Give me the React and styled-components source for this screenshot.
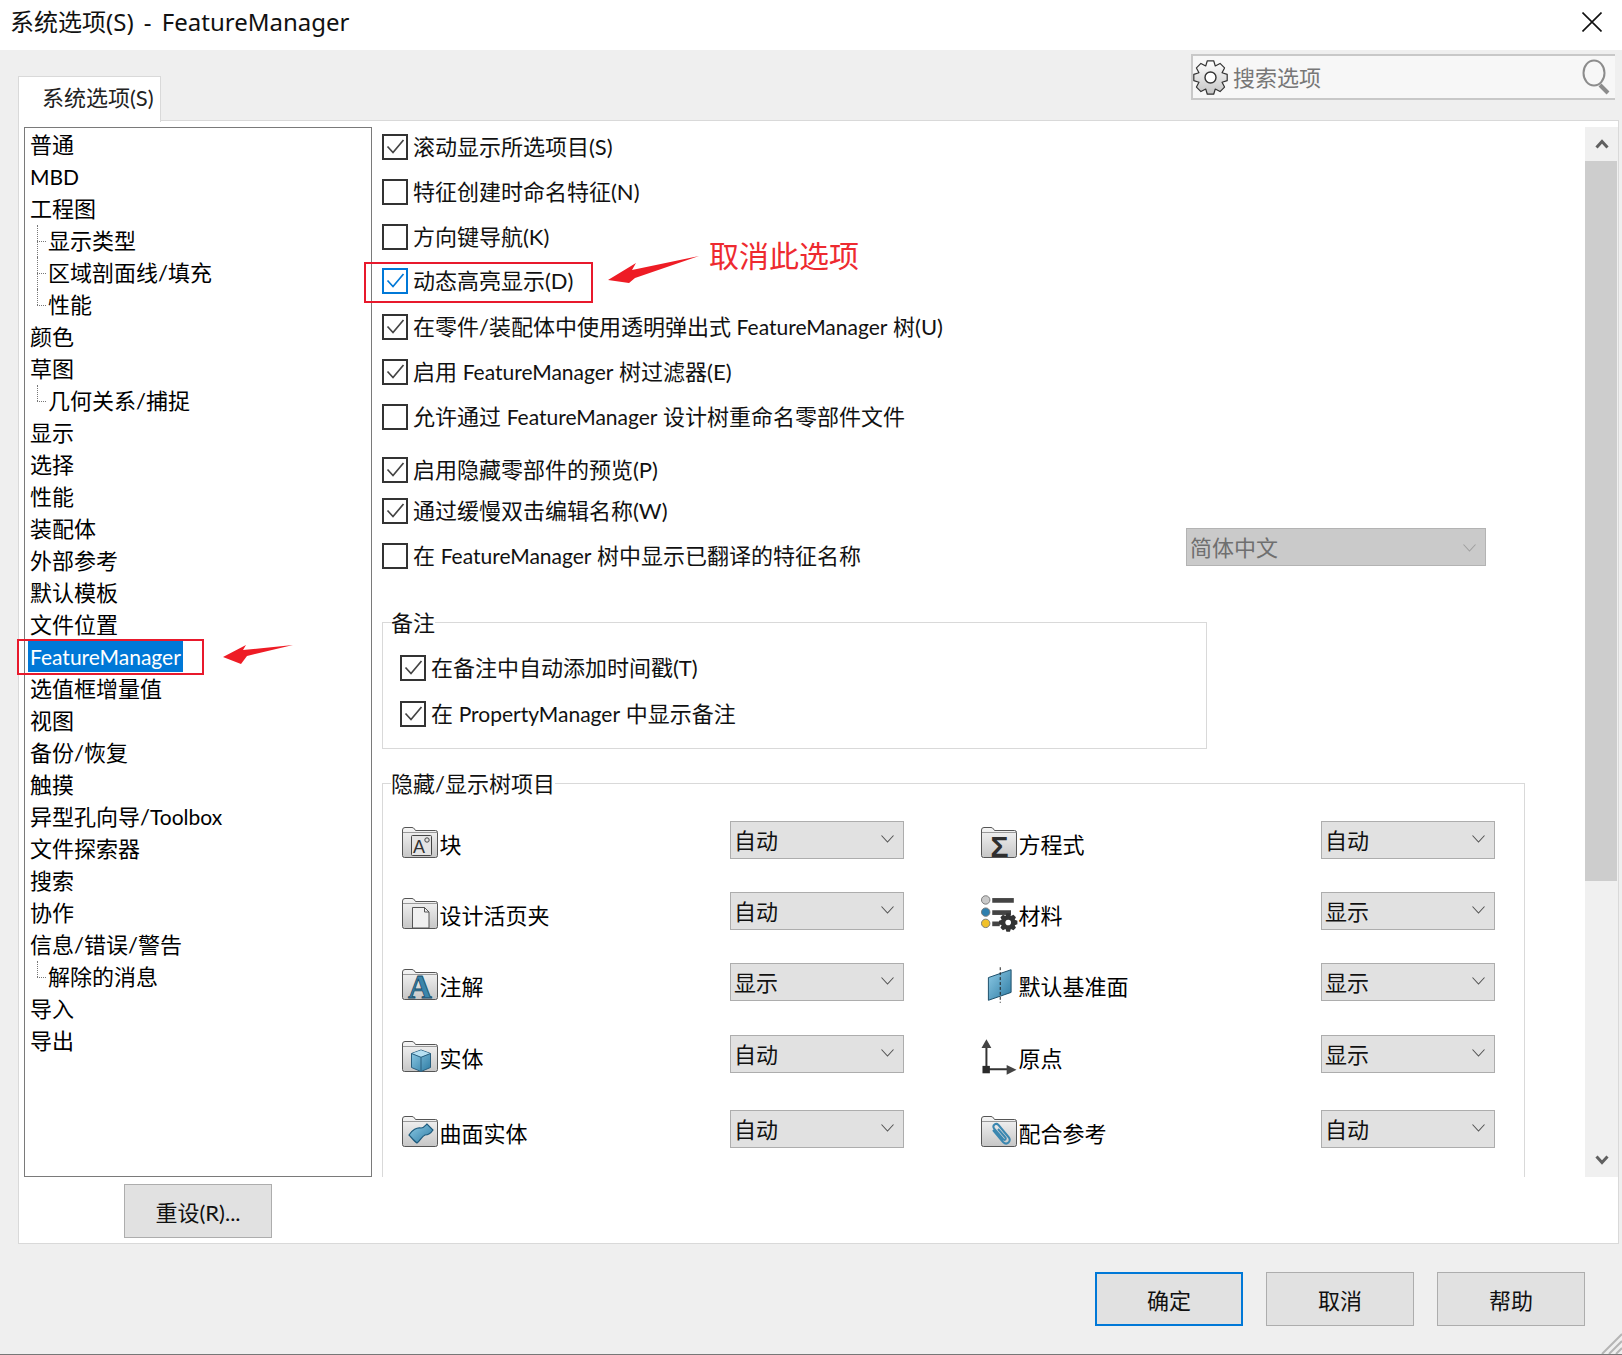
import React, { useId } from 'react';
import styled, { createGlobalStyle } from 'styled-components';

const Global = createGlobalStyle`
  html, body { margin: 0; padding: 0; background: #efefef; overflow: hidden; }
  * { box-sizing: border-box; }
  body { font-family: Lato, "Noto Sans CJK SC", sans-serif; color: #000; }
`;

const Shell = styled.div`
  position: relative; width: 1622px; height: 1355px; background: #efefef;
  border-bottom: 1px solid #777; display: flex; flex-direction: column; overflow: hidden;
`;
const TitleBar = styled.header`
  height: 50px; flex: none; background: #fff; display: flex; align-items: center;
  justify-content: space-between; padding: 0 20px 6px 10px;
`;
const Title = styled.h1`
  margin: 0; font-family: "Noto Sans", "Noto Sans CJK SC", sans-serif; font-size: 24px;
  line-height: 32px; font-weight: 400; color: #111; word-spacing: 4px;
`;
const Main = styled.div`
  flex: none; padding: 0 3px 0 18px; display: flex; flex-direction: column;
`;
const TabStrip = styled.div`
  height: 70px; display: flex; justify-content: space-between; align-items: flex-start;
`;
const Tab = styled.div`
  width: 143px; height: 46px; margin-top: 26px; background: #fff;
  border: 1px solid #d9d9d9; border-bottom: 0; position: relative; z-index: 1;
  font-size: 22px; line-height: 42px; padding-left: 23px; color: #222;
`;
const Search = styled.div`
  width: 424px; height: 46px; margin: 4px 4px 0 0; background: #f7f7f7;
  border: 2px solid #c8c8c8; border-right: 0; display: flex; align-items: center;
  padding: 0 5px 0 0; gap: 5px; font-size: 22px; color: #777;
`;
const SearchText = styled.span` flex: 1; line-height: 30px; padding-top: 2px; `;
const Panel = styled.section`
  height: 1124px; background: #fff; border: 1px solid #d9d9d9; padding: 6px 0 0 5px;
  display: flex; flex-direction: column;
`;
const Upper = styled.div` height: 1050px; display: flex; `;
const TreeBox = styled.ul`
  width: 348px; flex: none; margin: 0; padding: 1px 0 0; list-style: none;
  border: 1px solid #7a7a7a; background: #fff;
`;
const TreeItem = styled.li`
  position: relative; height: 32px; line-height: 32px; font-size: 22px; white-space: nowrap;
  padding-left: ${p => (p.$child ? 21 : 3)}px;
  ${p => p.$child && `
    &::before {
      content: ''; position: absolute; left: 12px; top: 0; width: 9px;
      height: ${p.$last ? '16px' : '32px'};
      border-left: 1px dotted #777;
    }
    &::after {
      content: ''; position: absolute; left: 12px; top: 16px; width: 9px;
      border-top: 1px dotted #777;
    }
  `}
`;
const TreeLabel = styled.span`
  display: inline-block; height: 31px; padding: 0 2px;
  background: ${p => (p.$selected ? '#0078d7' : 'transparent')};
  color: ${p => (p.$selected ? '#fff' : '#000')};
`;
const Latin = styled.span` font-size: 21px; `;
const Pane = styled.div`
  flex: 1; min-width: 0; height: 1050px; overflow: hidden; padding-left: 10px;
`;
const CheckRow = styled.label`
  display: flex; align-items: center; height: 40px; font-size: 22px; line-height: 30px;
  margin-top: ${p => p.$mt || 0}px; white-space: nowrap; color: #111;
`;
const RowText = styled.span` display: block; `;
const Box = styled.span`
  flex: none; width: 26px; height: 26px; margin: -1px 5px 0 0; background: #fff;
  border: 2px solid ${p => (p.$hover ? '#0078d7' : '#333')};
  display: flex; align-items: center; justify-content: center;
`;
const Spacer = styled.span` flex: 1; `;
const LangCombo = styled.div`
  width: 300px; height: 38px; margin: 0 99px 18px 0; flex: none; background: #cacaca;
  border: 1px solid #b3b3b3; color: #6f6f6f; display: flex; align-items: center;
  justify-content: space-between; padding: 2px 9px 0 3px; font-size: 22px;
`;
const Group = styled.fieldset`
  margin: ${p => p.$mt}px 0 0; padding: 0; border: 1px solid #d9d9d9;
  width: ${p => p.$w}px; height: ${p => p.$h}px; min-width: 0;
`;
const GroupLegend = styled.legend`
  margin-left: 8px; padding: 0; font-size: 22px; line-height: 32px; height: 30px; color: #111;
`;
const NoteRows = styled.div` padding: 11px 0 14px 17px; `;
const TreeRows = styled.div` padding: 23px 0 0 19px; `;
const VisRow = styled.div`
  display: grid; grid-template-columns: 328px 174px 417px 174px; height: 38px;
  margin-top: ${p => p.$mt || 0}px;
`;
const VisLabel = styled.div`
  display: flex; align-items: center; height: 38px; padding: 6px 0 0 ${p => p.$indent || 0}px;
  font-size: 22px; white-space: nowrap;
`;
const IconSlot = styled.span`
  width: 37.5px; flex: none; display: flex; align-items: center; justify-content: flex-start;
`;
const Combo = styled.div`
  height: 38px; background: #e1e1e1; border: 1px solid #adadad; display: flex;
  align-items: center; justify-content: space-between; padding: 0 9px 2px 3px;
  font-size: 22px; color: #111;
`;
const Scroll = styled.div`
  width: 33px; flex: none; height: 1050px; background: #f0f0f0; display: flex; flex-direction: column;
`;
const ScrollBtn = styled.div`
  height: 34px; flex: none; display: flex; align-items: center; justify-content: center;
`;
const Thumb = styled.div` width: 32px; height: 720px; flex: none; background: #cdcdcd; `;
const ScrollGap = styled.div` flex: 1; `;
const ResetRow = styled.div` padding: 7px 0 0 100px; `;
const Button = styled.button`
  width: 148px; height: ${p => p.$h || 54}px; background: #e1e1e1; padding: 0;
  border: ${p => (p.$primary ? '2px solid #0078d7' : '1px solid #adadad')};
  font: inherit; font-size: 22px; color: #111;
`;
const Footer = styled.footer`
  flex: none; display: flex; justify-content: flex-end; gap: 23px; padding: 28px 34px 0 0;
`;
const RedBox = styled.div`
  position: absolute; left: ${p => p.$x}px; top: ${p => p.$y}px; width: ${p => p.$w}px; height: ${p => p.$h}px;
  border: 2px solid #e8192c; pointer-events: none; z-index: 3;
`;
const Callout = styled.div`
  position: absolute; left: 709px; top: 233px; font-size: 30px; line-height: 44px;
  color: #ee2a30; white-space: nowrap; z-index: 3;
`;
const ArrowLayer = styled.svg`
  position: absolute; left: 0; top: 0; width: 1622px; height: 1355px; pointer-events: none; z-index: 3;
`;
const Grip = styled.svg`
  position: absolute; right: 0; bottom: 0; width: 22px; height: 22px;
`;
const IconSvg = styled.svg` display: block; overflow: visible; `;

// Long Latin words sit a little smaller than the CJK text around them.
const mixed = text =>
  text.split(/([A-Za-z]{3,})/).map((part, i) => (i % 2 ? <Latin key={i}>{part}</Latin> : part));

function gearPath(cx, cy, ro, ri, teeth) {
  const pts = [];
  const step = (Math.PI * 2) / teeth;
  for (let i = 0; i < teeth; i++) {
    const a = i * step - Math.PI / 2;
    [[-0.5, ri], [-0.24, ro], [0.24, ro], [0.5, ri]].forEach(([o, r]) => {
      const t = a + o * step;
      pts.push(`${(cx + r * Math.cos(t)).toFixed(2)} ${(cy + r * Math.sin(t)).toFixed(2)}`);
    });
  }
  return `M${pts.join('L')}Z`;
}

const Close = () => (
  <svg width="20" height="20" viewBox="0 0 20 20" fill="none" stroke="#111" strokeWidth="1.6">
    <path d="M.5.5l19 19M19.5.5l-19 19" />
  </svg>
);
const Gear = () => {
  const id = useId();
  return (
    <svg width="35" height="35" viewBox="0 0 35 35">
      <defs><linearGradient id={id} x1="0" y1="0" x2="0" y2="1"><stop offset="0" stopColor="#fff" /><stop offset="1" stopColor="#c4c4c4" /></linearGradient></defs>
      <path d={gearPath(17.5, 17.5, 17, 12.5, 8)} fill={`url(#${id})`} stroke="#333" strokeWidth="1.2" strokeLinejoin="round" />
      <circle cx="17.5" cy="17.5" r="5.5" fill="#fff" stroke="#333" strokeWidth="1.4" />
    </svg>
  );
};
const Magnifier = () => (
  <svg width="28" height="36" viewBox="0 0 28 36" fill="none">
    <ellipse cx="12" cy="14" rx="10.5" ry="12.5" stroke="#8c8c8c" strokeWidth="2" />
    <path d="M18 26l8 8" stroke="#8c8c8c" strokeWidth="4" />
  </svg>
);
const Tick = ({ color }) => (
  <svg width="19" height="17" viewBox="0 0 19 17" fill="none" stroke={color} strokeWidth="1.7">
    <path d="M1.5 8.5l5.5 6L17.5 2" />
  </svg>
);
const Chevron = ({ color = '#555' }) => (
  <svg width="13" height="8" viewBox="0 0 13 8" fill="none" stroke={color} strokeWidth="1.1">
    <path d="M.5.5l6 6.5 6-6.5" />
  </svg>
);
const ScrollChevron = ({ up }) => (
  <svg width="14" height="10" viewBox="0 0 14 10" fill="none" stroke="#606060" strokeWidth="3">
    <path d={up ? 'M1.5 8.5L7 2.5l5.5 6' : 'M1.5 1.5L7 7.5l5.5-6'} />
  </svg>
);

const Folder = ({ children }) => {
  const id = useId();
  return (
    <IconSvg width="36" height="32" viewBox="0 0 36 32">
      <defs><linearGradient id={id} x1="0" y1="0" x2="0" y2="1"><stop offset="0" stopColor="#f6f6f6" /><stop offset="1" stopColor="#c6c6c6" /></linearGradient></defs>
      <path d="M.5 3q0-2.500 2.500-2.500h7q1.500 0 2.500 1.500l1 1.500h20q2 0 2 2v23q0 2-2 2H2.500q-2 0-2-2z" fill={`url(#${id})`} stroke="#555" />
      <path d="M1 5.500h34" stroke="#999" />
      {children}
    </IconSvg>
  );
};
const BlueFill = ({ id }) => (
  <defs><linearGradient id={id} x1="0" y1="0" x2="1" y2="1"><stop offset="0" stopColor="#8fcbe6" /><stop offset="1" stopColor="#2d7ba3" /></linearGradient></defs>
);
const BlockIcon = () => (
  <Folder>
    <rect x="9.500" y="8.500" width="20" height="20" rx="1" fill="#e4e4e4" stroke="#444" />
    <text x="11" y="26" fontFamily="Liberation Sans" fontSize="18" fill="#333">A</text>
    <circle cx="25" cy="13" r="2.200" fill="none" stroke="#444" />
  </Folder>
);
const PageIcon = () => (
  <Folder>
    <path d="M10.500 9.500h12l4.500 4.500v16h-16.500z" fill="#f0f0f0" stroke="#555" />
    <path d="M22.500 9.500v4.500h4.500" fill="none" stroke="#555" />
  </Folder>
);
const NoteIcon = () => (
  <Folder>
    <text x="6" y="29" fontFamily="Liberation Serif" fontWeight="700" fontSize="33" fill="#3a85ab" stroke="#174c69" strokeWidth=".8">A</text>
  </Folder>
);
const SolidIcon = () => {
  const id = useId();
  return (
    <Folder>
      <BlueFill id={id} />
      <path d="M9.500 12.500l9.500-3.500 9.500 3.500v14l-9.500 4-9.500-4z" fill={`url(#${id})`} stroke="#2a5f7f" />
      <path d="M10 12.500l9-3.300 9 3.300-9 3.500z" fill="#b7e0f2" />
      <path d="M9.500 12.500l9.500 3.800 9.500-3.800M19 16.300v14" fill="none" stroke="#2a5f7f" />
    </Folder>
  );
};
const SurfaceIcon = () => {
  const id = useId();
  return (
    <Folder>
      <BlueFill id={id} />
      <path d="M7 19C10 14 15 11 19 12C22 12 24 9 25 8L31 14C29 17 26 19 23 19C20 20 18 25 15 27C12 25 9 21 7 19Z" fill={`url(#${id})`} stroke="#1d5a7c" strokeWidth="1.200" />
    </Folder>
  );
};
const SigmaIcon = () => (
  <Folder>
    <text x="9.500" y="29.500" fontFamily="Liberation Sans" fontWeight="700" fontSize="30" fill="#2e2e2e">Σ</text>
  </Folder>
);
const ClipIcon = () => (
  <Folder>
    <path d="M12 14l10 12q3 3 5.500.500t0-5.500l-10-12q-2-2-4-.500t-.500 4l9 10.500q1.200 1.500 2.300.500t-.300-2.500l-7-8" fill="none" stroke="#3b87b0" strokeWidth="2" />
  </Folder>
);
const MaterialIcon = () => (
  <svg width="40" height="40" viewBox="0 0 40 40">
    <circle cx="5" cy="5" r="4.500" fill="#c9c9c9" stroke="#777" />
    <circle cx="5" cy="18" r="4.500" fill="#2f7fae" stroke="#777" />
    <circle cx="5" cy="30" r="4.500" fill="#f1c12a" stroke="#777" />
    <rect x="12" y="3" width="23" height="5" fill="#444" />
    <rect x="12" y="16" width="20" height="5" fill="#444" />
    <rect x="12" y="28" width="8" height="5" fill="#444" />
    <path d={gearPath(29, 29, 10, 7.500, 8)} fill="#333" />
    <circle cx="29" cy="29" r="3" fill="#fff" />
  </svg>
);
const PlaneIcon = () => {
  const id = useId();
  return (
    <svg width="38" height="36" viewBox="0 0 38 36">
      <BlueFill id={id} />
      <path d="M7.500 10.500l23-8v23l-23 8z" fill={`url(#${id})`} stroke="#1d4f6b" />
      <path d="M19.500 0v36" stroke="#222" strokeDasharray="3 2" />
    </svg>
  );
};
const OriginIcon = () => (
  <svg width="38" height="36" viewBox="0 0 38 36">
    <path d="M5.500 32V9M6 30.500h24" stroke="#333" strokeWidth="2" />
    <path d="M5.500 0l5 9h-10zM36 31l-10-5v10z" fill="#444" />
    <rect x="1.500" y="27" width="7.500" height="7.500" fill="#2a2a2a" />
  </svg>
);

const tree = [
  ['普通'], ['MBD'], ['工程图'], ['显示类型', 1], ['区域剖面线/填充', 1], ['性能', 2], ['颜色'], ['草图'],
  ['几何关系/捕捉', 2], ['显示'], ['选择'], ['性能'], ['装配体'], ['外部参考'], ['默认模板'], ['文件位置'],
  ['FeatureManager', 0, true], ['选值框增量值'], ['视图'], ['备份/恢复'], ['触摸'], ['异型孔向导/Toolbox'],
  ['文件探索器'], ['搜索'], ['协作'], ['信息/错误/警告'], ['解除的消息', 2], ['导入'], ['导出'],
];
const options = [
  ['滚动显示所选项目(S)', true, 0],
  ['特征创建时命名特征(N)', false, 5],
  ['方向键导航(K)', false, 5],
  ['动态高亮显示(D)', true, 4, true],
  ['在零件/装配体中使用透明弹出式 FeatureManager 树(U)', true, 6],
  ['启用 FeatureManager 树过滤器(E)', true, 5],
  ['允许通过 FeatureManager 设计树重命名零部件文件', false, 5],
  ['启用隐藏零部件的预览(P)', true, 13],
  ['通过缓慢双击编辑名称(W)', true, 1],
];
const rows = [
  { mt: 0, l: ['块', BlockIcon, '自动'], r: ['方程式', SigmaIcon, '自动'] },
  { mt: 33, l: ['设计活页夹', PageIcon, '自动'], r: ['材料', MaterialIcon, '显示'] },
  { mt: 33, l: ['注解', NoteIcon, '显示'], r: ['默认基准面', PlaneIcon, '显示'] },
  { mt: 34, l: ['实体', SolidIcon, '自动'], r: ['原点', OriginIcon, '显示'] },
  { mt: 37, l: ['曲面实体', SurfaceIcon, '自动'], r: ['配合参考', ClipIcon, '自动'] },
];

const Check = ({ on, hover }) => (
  <Box $hover={hover}>{on && <Tick color={hover ? '#0078d7' : '#444'} />}</Box>
);

export default function App() {
  return (
    <Shell>
      <Global />
      <TitleBar>
        <Title>系统选项(S) - FeatureManager</Title>
        <Close />
      </TitleBar>
      <Main>
        <TabStrip>
          <Tab>系统选项(S)</Tab>
          <Search>
            <Gear />
            <SearchText>搜索选项</SearchText>
            <Magnifier />
          </Search>
        </TabStrip>
        <Panel>
          <Upper>
            <TreeBox>
              {tree.map(([t, c, sel], i) => (
                <TreeItem key={i} $child={!!c} $last={c === 2}>
                  <TreeLabel $selected={sel}>{mixed(t)}</TreeLabel>
                </TreeItem>
              ))}
            </TreeBox>
            <Pane>
              {options.map(([t, on, mt, hover]) => (
                <CheckRow key={t} $mt={mt}><Check on={on} hover={hover} /><RowText>{mixed(t)}</RowText></CheckRow>
              ))}
              <CheckRow $mt={5}>
                <Check /><RowText>{mixed('在 FeatureManager 树中显示已翻译的特征名称')}</RowText>
                <Spacer />
                <LangCombo>简体中文<Chevron color="#a0a0a0" /></LangCombo>
              </CheckRow>
              <Group $mt={31} $w={825} $h={142}>
                <GroupLegend>备注</GroupLegend>
                <NoteRows>
                  <CheckRow><Check on /><RowText>在备注中自动添加时间戳(T)</RowText></CheckRow>
                  <CheckRow $mt={6}><Check on /><RowText>{mixed('在 PropertyManager 中显示备注')}</RowText></CheckRow>
                </NoteRows>
              </Group>
              <Group $mt={19} $w={1143} $h={520}>
                <GroupLegend>隐藏/显示树项目</GroupLegend>
                <TreeRows>
                  {rows.map(({ mt, l, r }) => {
                    const L = l[1];
                    const R = r[1];
                    return (
                      <VisRow key={l[0]} $mt={mt}>
                        <VisLabel><IconSlot><L /></IconSlot>{l[0]}</VisLabel>
                        <Combo>{l[2]}<Chevron /></Combo>
                        <VisLabel $indent={77}><IconSlot><R /></IconSlot>{r[0]}</VisLabel>
                        <Combo>{r[2]}<Chevron /></Combo>
                      </VisRow>
                    );
                  })}
                </TreeRows>
              </Group>
            </Pane>
            <Scroll>
              <ScrollBtn><ScrollChevron up /></ScrollBtn>
              <Thumb />
              <ScrollGap />
              <ScrollBtn><ScrollChevron /></ScrollBtn>
            </Scroll>
          </Upper>
          <ResetRow><Button>重设(R)...</Button></ResetRow>
        </Panel>
        <Footer>
          <Button $primary>确定</Button>
          <Button>取消</Button>
          <Button>帮助</Button>
        </Footer>
      </Main>
      <RedBox $x={364} $y={262} $w={229} $h={41} />
      <RedBox $x={17} $y={639} $w={187} $h={36} />
      <Callout>取消此选项</Callout>
      <ArrowLayer viewBox="0 0 1622 1355">
        <path d="M608 280L636 263l-4 7L699 256 635 278l-6 5z" fill="#ee1c25" />
        <path d="M223 657L246 645l-3 5L293 645 247 656l-6 8z" fill="#ee1c25" />
      </ArrowLayer>
      <Grip viewBox="0 0 22 22" fill="none" stroke="#b5b5b5" strokeWidth="2">
        <path d="M22 2L2 22M22 9l-13 13M22 16l-6 6" />
      </Grip>
    </Shell>
  );
}
